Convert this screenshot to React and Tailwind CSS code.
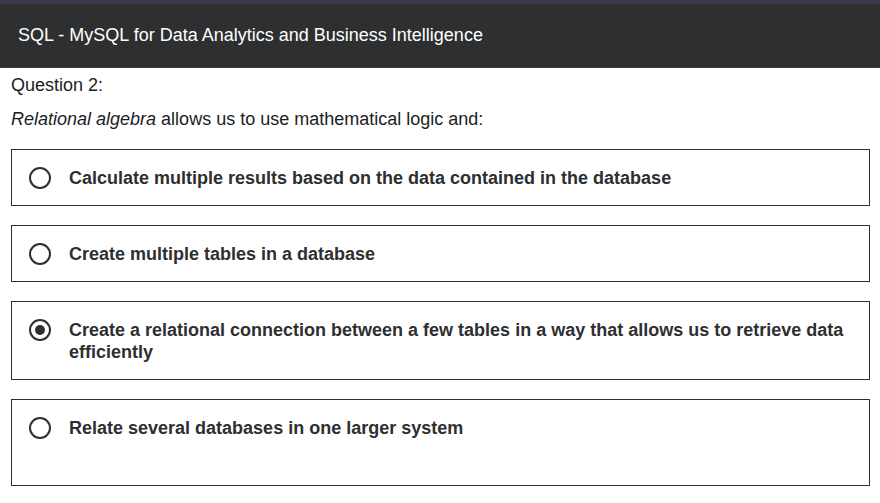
import React, { useState } from "react";

const answers = [
  { id: "a", text: "Calculate multiple results based on the data contained in the database" },
  { id: "b", text: "Create multiple tables in a database" },
  {
    id: "c",
    text: "Create a relational connection between a few tables in a way that allows us to retrieve data efficiently",
  },
  { id: "d", text: "Relate several databases in one larger system", tall: true },
];

const Radio = ({ checked }) => (
  <span className="flex h-[22px] w-[22px] shrink-0 items-center justify-center rounded-full border-2 border-[#2d2f31]">
    {checked && <span className="h-[10px] w-[10px] rounded-full bg-[#2d2f31]" />}
  </span>
);

const App = () => {
  const [selected, setSelected] = useState("c");

  return (
    <div className="min-h-[503px] bg-white font-['Liberation_Sans',Arial,sans-serif] text-[#1c1d1f]">
      <div className="h-[3px] bg-[#3c3650]" />
      <div className="h-[1px] bg-[#3a3b3d]" />
      <div className="flex h-[63px] items-center bg-[#2d2f31] px-[18px] text-[18px] text-white">
        SQL - MySQL for Data Analytics and Business Intelligence
      </div>
      <div className="h-[1px] bg-[#3e4143]" />

      <div className="px-[11px] pt-[5px]">
        <p className="text-[18px] leading-[24px]">Question 2:</p>
        <p className="mt-[10px] text-[18px] leading-[24px]">
          <em>Relational algebra</em> allows us to use mathematical logic and:
        </p>

        <div className="mt-[18px] flex w-[859px] flex-col gap-[19px]">
          {answers.map((a) => (
            <label
              key={a.id}
              onClick={() => setSelected(a.id)}
              className={`flex cursor-pointer items-start gap-[18px] border border-[#2d2f31] px-[17px] pt-[17px] pb-[16px] ${
                a.tall ? "min-h-[87px]" : ""
              }`}
            >
              <Radio checked={selected === a.id} />
              <span className="text-[18px] font-bold leading-[22px] text-[#2d2f31]">{a.text}</span>
            </label>
          ))}
        </div>
      </div>
    </div>
  );
};

export default App;
